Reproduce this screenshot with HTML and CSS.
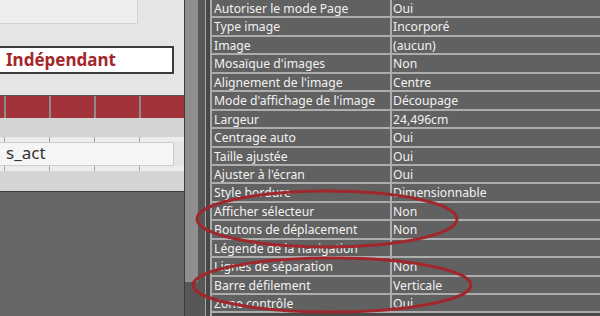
FILE: index.html
```html
<!DOCTYPE html>
<html lang="fr">
<head>
  <meta charset="UTF-8">
  <meta name="viewport" content="width=device-width, initial-scale=1.0">
  <title>Propriétés du formulaire</title>
  <link rel="stylesheet" href="styles.css">
</head>
<body>
  <div class="screen">
    <!-- Form design surface -->
    <div class="form">
      <div class="top-box"></div>
      <div class="field field-title">Indépendant</div>
      <div class="section-bar"><span></span><span></span><span></span><span></span></div>
      <div class="band band-upper"></div>
      <div class="ticks"><span></span><span></span><span></span><span></span></div>
      <div class="field field-code">s_act</div>
      <div class="ticks"><span></span><span></span><span></span><span></span></div>
      <div class="band band-lower"></div>
      <div class="backdrop"></div>
    </div>

    <div class="vscroll"><div class="thumb"></div></div>
    <div class="splitter"></div>

    <!-- Property sheet -->
    <div class="sheet">
      <div class="prop"><div class="name">Autoriser le mode Page</div><div class="value">Oui</div></div>
      <div class="prop"><div class="name">Type image</div><div class="value">Incorporé</div></div>
      <div class="prop"><div class="name">Image</div><div class="value">(aucun)</div></div>
      <div class="prop"><div class="name">Mosaïque d'images</div><div class="value">Non</div></div>
      <div class="prop"><div class="name">Alignement de l'image</div><div class="value">Centre</div></div>
      <div class="prop"><div class="name">Mode d'affichage de l'image</div><div class="value">Découpage</div></div>
      <div class="prop"><div class="name">Largeur</div><div class="value">24,496cm</div></div>
      <div class="prop"><div class="name">Centrage auto</div><div class="value">Oui</div></div>
      <div class="prop"><div class="name">Taille ajustée</div><div class="value">Oui</div></div>
      <div class="prop"><div class="name">Ajuster à l'écran</div><div class="value">Oui</div></div>
      <div class="prop"><div class="name">Style bordure</div><div class="value">Dimensionnable</div></div>
      <div class="prop"><div class="name">Afficher sélecteur</div><div class="value">Non</div></div>
      <div class="prop"><div class="name">Boutons de déplacement</div><div class="value">Non</div></div>
      <div class="prop"><div class="name">Légende de la navigation</div><div class="value"></div></div>
      <div class="prop"><div class="name">Lignes de séparation</div><div class="value">Non</div></div>
      <div class="prop"><div class="name">Barre défilement</div><div class="value">Verticale</div></div>
      <div class="prop"><div class="name">Zone contrôle</div><div class="value">Oui</div></div>
    </div>

    <!-- Hand-drawn highlight rings -->
    <svg class="marks" width="600" height="316" viewBox="0 0 600 316">
      <ellipse cx="327" cy="219" rx="130" ry="28" />
      <ellipse cx="332" cy="285" rx="139" ry="27" />
    </svg>
  </div>
</body>
</html>
```

FILE: styles.css
```css
body {
  margin: 0;
  background-color: #666666;
  font-family: "Noto Sans", "Open Sans", sans-serif;
}

.screen {
  position: relative;
  display: flex;
  width: 600px;
  height: 316px;
  overflow: hidden;
}

/* ---- form design surface ---- */

.form {
  display: flex;
  flex-direction: column;
  flex: 0 0 180px;
  background-color: #e5e5e5;
  border-right: 1px solid #3c3c3c;
}

.top-box {
  width: 137px;
  height: 23px;
  background-color: #eeeeee;
  border-right: 1px solid #d2d2d2;
  border-bottom: 1px solid #d2d2d2;
  margin-bottom: 22px;
}

.field {
  box-sizing: border-box;
  width: 174px;
  padding-left: 6px;
}

.field-title {
  height: 28px;
  background-color: #ffffff;
  border: 2px solid #3c3c3c;
  border-left: none;
  color: #a4262c;
  font-weight: bold;
  font-size: 17px;
  line-height: 24px;
  margin-bottom: 21px;
}

.field-code {
  height: 24px;
  background-color: #f5f5f5;
  border: 1px solid #cdcdcd;
  border-left: none;
  color: #333333;
  font-size: 17px;
  line-height: 20px;
}

.section-bar,
.ticks {
  display: flex;
  padding-left: 4px;
}

.section-bar {
  height: 22px;
  background-color: #a3333a;
  border-top: 1px solid #555555;
}

.section-bar span {
  flex: 0 0 45px;
  box-sizing: border-box;
  border-left: 2px solid #8c8c8c;
}

.ticks {
  height: 5px;
  background-color: #ececec;
}

.ticks span {
  flex: 0 0 45px;
  box-sizing: border-box;
  border-left: 1px solid #a5a5a5;
}

.band {
  background-color: #d4d4d4;
}

.band-upper {
  height: 19px;
}

.band-lower {
  height: 20px;
  border-bottom: 1px solid #3c3c3c;
}

.backdrop {
  flex: 1;
  background-color: #666666;
}

/* ---- scrollbar and splitter ---- */

.vscroll {
  flex: 0 0 20px;
  background-color: #575757;
}

.thumb {
  width: 13px;
  height: 282px;
  background-color: #8f8f8f;
}

.splitter {
  flex: 0 0 4px;
  background-color: #474747;
  border-left: 1px solid #a8a8a8;
}

/* ---- property sheet ---- */

.sheet {
  flex: 1;
  background-color: #4a4a4a;
  border-left: 2px solid #aaaaaa;
}

.prop {
  display: grid;
  grid-template-columns: 180px 1fr;
  height: 16.45px;
  border-bottom: 2px solid #adadad;
  background-color: #616161;
  color: #f2f2f2;
  font-size: 12.2px;
  line-height: 17px;
  white-space: nowrap;
}

.name {
  padding-left: 2px;
  border-right: 2px solid #adadad;
  overflow: hidden;
}

.value {
  padding-left: 1px;
}

.marks {
  position: absolute;
  left: 0;
  top: 0;
  pointer-events: none;
}

.marks ellipse {
  fill: none;
  stroke: #a0282d;
  stroke-width: 3;
}
```
